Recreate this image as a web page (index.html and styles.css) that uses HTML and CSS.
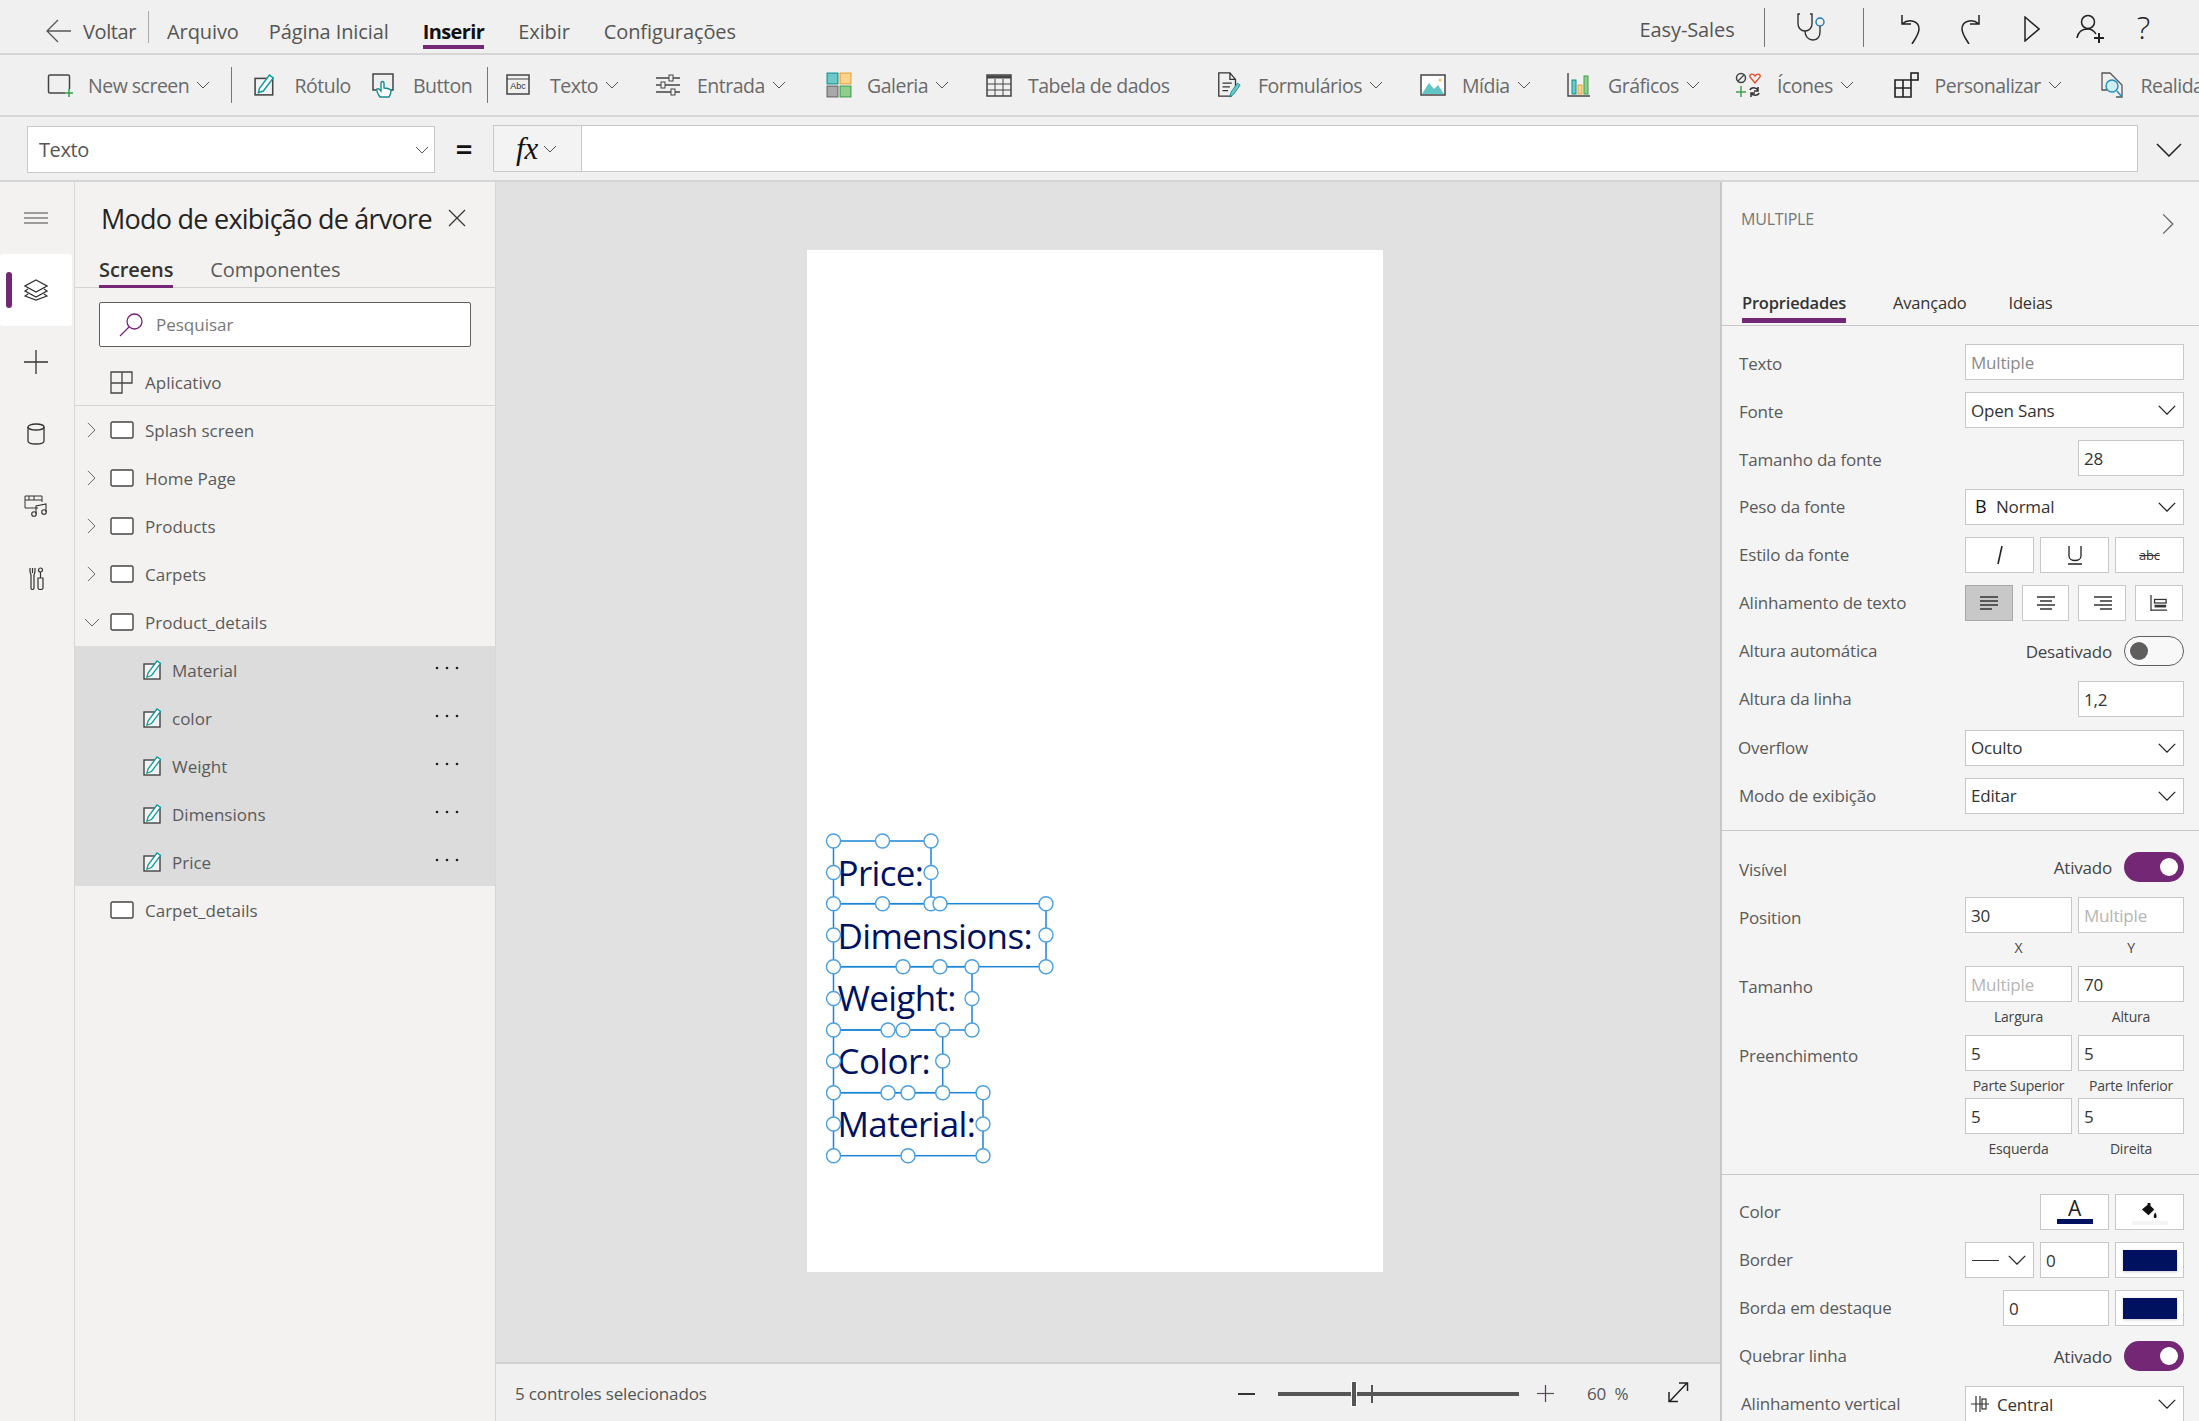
FILE: index.html
```html
<!DOCTYPE html>
<html lang="pt">
<head>
<meta charset="utf-8">
<title>Easy-Sales</title>
<link rel="stylesheet" href="styles.css">
</head>
<body>
<svg class="defs" width="0" height="0">
  <symbol id="chev" viewBox="0 0 14 8"><path d="M1 1l6 6 6-6" fill="none" stroke="currentColor" stroke-width="1"/></symbol>
  <symbol id="chevb" viewBox="0 0 22 12"><path d="M1 1l10 10 10-10" fill="none" stroke="#222" stroke-width="1.6"/></symbol>
  <symbol id="chevr" viewBox="0 0 10 18"><path d="M1 1l8 8-8 8" fill="none" stroke="#666" stroke-width="1.1"/></symbol>
  <symbol id="scr" viewBox="0 0 24 18"><rect x="1" y="1" width="22" height="16" rx="1.5" fill="#fff" stroke="#444" stroke-width="1.4"/></symbol>
  <symbol id="lbl" viewBox="0 0 20 20"><rect x="1" y="4" width="16" height="15" fill="#f3f3f3" stroke="#444" stroke-width="1.4"/><path d="M4 17l1-4 9-12 3.500 2.500-9 12z" fill="#fff" stroke="#0f9a9a" stroke-width="1.3"/></symbol>
  <symbol id="dots" viewBox="0 0 24 4"><circle cx="2" cy="2" r="1.300" fill="#222"/><circle cx="12" cy="2" r="1.300" fill="#222"/><circle cx="22" cy="2" r="1.300" fill="#222"/></symbol>
</svg>
<div class="app">

<header class="topbar">
  <svg class="ic-back" viewBox="0 0 25 24"><path d="M12 1L1 12l11 11M1 12h24" fill="none" stroke="#555" stroke-width="1.300"/></svg>
  <span class="nav-back">Voltar</span>
  <span class="vsep first"></span>
  <nav class="nav">
    <a class="nav-item tight">Arquivo</a>
    <a class="nav-item">Página Inicial</a>
    <a class="nav-item active">Inserir</a>
    <a class="nav-item">Exibir</a>
    <a class="nav-item">Configurações</a>
  </nav>
  <div class="top-right">
    <span class="app-name">Easy-Sales</span>
    <span class="vsep tall"></span>
    <svg class="ic-steth" viewBox="0 0 30 28"><path d="M3 1H1v10c0 4 3 7 7 7s7-3 7-7V1h-2" fill="none" stroke="#333" stroke-width="1.400"/><path d="M8 18c0 5 3 9 8 9s7-4 7-8v-6" fill="none" stroke="#333" stroke-width="1.400"/><circle cx="23" cy="9" r="4" fill="none" stroke="#2277aa" stroke-width="1.400"/></svg>
    <span class="vsep tall b"></span>
    <svg class="ic-top undo" viewBox="0 0 22 30"><path d="M3 1v9h9M3 10c7-6 17-3 17 5 0 5-4 10-7 15" fill="none" stroke="#222" stroke-width="1.500"/></svg>
    <svg class="ic-top redo" viewBox="0 0 22 30"><path d="M19 1v9h-9M19 10c-7-6-17-3-17 5 0 5 4 10 7 15" fill="none" stroke="#222" stroke-width="1.500"/></svg>
    <svg class="ic-top play" viewBox="0 0 16 26"><path d="M1 1l14 12L1 25z" fill="none" stroke="#222" stroke-width="1.500"/></svg>
    <svg class="ic-top person" viewBox="0 0 28 30"><circle cx="12" cy="8" r="6.500" fill="none" stroke="#222" stroke-width="1.500"/><path d="M1 24c1-6 5-9 11-9 4 0 6 2 8 5" fill="none" stroke="#222" stroke-width="1.500"/><path d="M23 19v10M18 24h10" stroke="#222" stroke-width="2"/></svg>
    <span class="help">?</span>
  </div>
</header>

<div class="ribbon">
  <div class="rib w-new"><svg class="ri" viewBox="0 0 26 24"><path d="M18 20H3a1.500 1.500 0 0 1-1.500-1.500v-15A1.500 1.500 0 0 1 3 2h18a1.500 1.500 0 0 1 1.500 1.500V16" fill="none" stroke="#444" stroke-width="1.500"/><path d="M22 16v8M18 20h8" stroke="#2f9e44" stroke-width="1.500"/></svg><span>New screen</span><svg class="ch"><use href="#chev"/></svg></div>
  <span class="rsep a"></span>
  <div class="rib w-rot"><svg class="ri small"><use href="#lbl"/></svg><span>Rótulo</span></div>
  <div class="rib w-btn"><svg class="ri" viewBox="0 0 26 26"><path d="M6 18H2V2h20v16h-2" fill="none" stroke="#444" stroke-width="1.500"/><path d="M9 25c-2-3-4-6-3-8 2-1 3 1 4 2v-8c0-2 3-2 3 0v5c3 0 7 1 7 3 0 3-1 4-2 6z" fill="#fff" stroke="#0f8f8f" stroke-width="1.400"/></svg><span>Button</span></div>
  <span class="rsep b"></span>
  <div class="rib w-txt"><svg class="ri" viewBox="0 0 26 24"><rect x="1" y="2" width="22" height="19" fill="none" stroke="#444" stroke-width="1.500"/><path d="M1 6h22" stroke="#444"/><text x="12" y="16" class="abc">Abc</text></svg><span>Texto</span><svg class="ch"><use href="#chev"/></svg></div>
  <div class="rib w-ent"><svg class="ri" viewBox="0 0 26 24"><path d="M1 5h24M1 12h24M1 19h24" stroke="#444" stroke-width="1.500"/><rect x="14" y="2" width="4" height="6" fill="#f0f0f0" stroke="#444"/><rect x="6" y="9" width="4" height="6" fill="#f0f0f0" stroke="#444"/><rect x="16" y="16" width="4" height="6" fill="#f0f0f0" stroke="#444"/></svg><span>Entrada</span><svg class="ch"><use href="#chev"/></svg></div>
  <div class="rib w-gal"><svg class="ri" viewBox="0 0 24 24"><rect x="1" y="1" width="10" height="10" fill="#6dc8c8" stroke="#0f8f8f"/><rect x="13" y="1" width="10" height="10" fill="#fbd38d" stroke="#e8a33d"/><rect x="1" y="13" width="10" height="10" fill="#a8a8a8" stroke="#666"/><rect x="13" y="13" width="10" height="10" fill="#8fce8f" stroke="#3f9e4f"/></svg><span>Galeria</span><svg class="ch"><use href="#chev"/></svg></div>
  <div class="rib w-tab"><svg class="ri" viewBox="0 0 26 24"><rect x="1" y="2" width="24" height="21" fill="none" stroke="#444" stroke-width="1.500"/><path d="M1 4h24" stroke="#444" stroke-width="3"/><path d="M1 11h24M1 17h24M9 6v17M17 6v17" stroke="#444"/></svg><span>Tabela de dados</span></div>
  <div class="rib w-for"><svg class="ri" viewBox="0 0 26 28"><path d="M16 26H2V1h12l6 7v8M14 1v7h6M6 12h10M6 16h8M6 20h6" fill="none" stroke="#333" stroke-width="1.400"/><path d="M14 27l1-5 7-10 3 2-7 10z" fill="#6dc8c8" stroke="#0f8f8f"/></svg><span>Formulários</span><svg class="ch"><use href="#chev"/></svg></div>
  <div class="rib w-mid"><svg class="ri" viewBox="0 0 26 24"><rect x="1" y="2" width="24" height="20" fill="#fff" stroke="#444" stroke-width="1.500"/><path d="M2 21l7-11 5 6 4-4 6 9z" fill="#5fc5c5"/><circle cx="20" cy="7" r="1.500" fill="#f3c15f"/></svg><span>Mídia</span><svg class="ch"><use href="#chev"/></svg></div>
  <div class="rib w-gra"><svg class="ri" viewBox="0 0 24 26"><path d="M1 1v23h22" fill="none" stroke="#444" stroke-width="1.400"/><rect x="5" y="8" width="4" height="14" fill="#6dc8c8" stroke="#0f8f8f"/><rect x="11" y="13" width="4" height="9" fill="#fbd38d" stroke="#e8a33d"/><rect x="17" y="4" width="4" height="18" fill="#8fce8f" stroke="#3f9e4f"/></svg><span>Gráficos</span><svg class="ch"><use href="#chev"/></svg></div>
  <div class="rib w-ico"><svg class="ri" viewBox="0 0 26 26"><circle cx="6" cy="6" r="4.500" fill="none" stroke="#444" stroke-width="1.500"/><path d="M3 9l6-6" stroke="#444" stroke-width="1.300"/><path d="M20 11l-5-6c-1-3 3-4 5-1 2-3 6-2 5 1z" fill="none" stroke="#e8502a" stroke-width="1.400"/><path d="M6 14v11M1 20h10" stroke="#3f9e4f" stroke-width="1.500"/><path d="M15 18c1-3 6-3 8 0M24 21c-1 3-6 3-8 0M23 15v4h-4M16 25v-4h4" fill="none" stroke="#333" stroke-width="1.500"/></svg><span>Ícones</span><svg class="ch"><use href="#chev"/></svg></div>
  <div class="rib w-per"><svg class="ri" viewBox="0 0 26 26"><path d="M1 8h16v17H1zM1 16h16M9 8v17" fill="none" stroke="#222" stroke-width="1.600"/><rect x="17" y="1" width="7" height="7" fill="none" stroke="#222" stroke-width="1.600"/></svg><span>Personalizar</span><svg class="ch"><use href="#chev"/></svg></div>
  <div class="rib w-rea"><svg class="ri" viewBox="0 0 24 26"><path d="M7 18H2V1h8l12 12v12h-6" fill="none" stroke="#555" stroke-width="1.300"/><circle cx="12" cy="14" r="6" fill="#cfeef5" stroke="#1f8fc0" stroke-width="1.400"/><path d="M17 19l5 6" stroke="#1f8fc0" stroke-width="1.500"/></svg><span>Realidade</span></div>
</div>

<div class="formula">
  <div class="prop-select"><span>Texto</span><svg class="ch"><use href="#chev"/></svg></div>
  <span class="eq">=</span>
  <div class="fx-box"><span class="fx">fx</span><svg class="ch"><use href="#chev"/></svg></div>
  <div class="fx-input"></div>
  <svg class="fx-expand" viewBox="0 0 26 14"><path d="M1 1l12 12L25 1" fill="none" stroke="#222" stroke-width="1.500"/></svg>
</div>

<div class="main">
  <aside class="rail">
    <div class="rail-item"><svg class="rail-ic" viewBox="0 0 24 12"><path d="M0 1h24M0 6h24M0 11h24" stroke="#444"/></svg></div>
    <div class="rail-item on"><svg class="rail-ic" viewBox="0 0 24 22"><path d="M12 1l11 6-11 6L1 7z" fill="#fff" stroke="#333" stroke-width="1.300"/><path d="M4 10l-3 2 11 6 11-6-3-2M4 15l-3 2 11 4 11-4-3-2" fill="none" stroke="#333" stroke-width="1.300"/></svg></div>
    <div class="rail-item"><svg class="rail-ic" viewBox="0 0 24 24"><path d="M12 0v24M0 12h24" stroke="#333" stroke-width="1.300"/></svg></div>
    <div class="rail-item"><svg class="rail-ic" viewBox="0 0 24 22"><ellipse cx="12" cy="4" rx="8" ry="3" fill="none" stroke="#333" stroke-width="1.300"/><path d="M4 4v14c0 4 16 4 16 0V4" fill="none" stroke="#333" stroke-width="1.300"/></svg></div>
    <div class="rail-item"><svg class="rail-ic" viewBox="0 0 24 22"><path d="M14 13H1V1h17v6M1 5h17M5 1v4M10 1v4" fill="none" stroke="#333" stroke-width="1"/><path d="M12 19V11l10-2v8" fill="none" stroke="#333" stroke-width="1.100"/><circle cx="10" cy="19" r="2.300" fill="none" stroke="#333" stroke-width="1.100"/><circle cx="20" cy="17" r="2.300" fill="none" stroke="#333" stroke-width="1.100"/></svg></div>
    <div class="rail-item"><svg class="rail-tools" viewBox="0 0 15 23"><path d="M1 1v3c0 2 1 3 1 4v13c0 2 3 2 3 0V8c0-1 1-2 1-4V1" fill="none" stroke="#333" stroke-width="1.200"/><path d="M3.500 1v5" stroke="#333" stroke-width="1.200"/><circle cx="11.500" cy="3" r="2" fill="none" stroke="#333" stroke-width="1.200"/><path d="M11.500 5v6M9 11h5v10c0 2-5 2-5 0z" fill="none" stroke="#333" stroke-width="1.200"/></svg></div>
  </aside>

  <section class="tree">
    <div class="tree-head"><h1>Modo de exibição de árvore</h1><svg class="close" viewBox="0 0 18 18"><path d="M1 1l16 16M17 1L1 17" stroke="#333" stroke-width="1.200"/></svg></div>
    <div class="tree-tabs"><span class="tt active">Screens</span><span class="tt">Componentes</span></div>
    <div class="search"><svg class="search-ic" viewBox="0 0 24 24"><circle cx="15.500" cy="8.500" r="7.500" fill="none" stroke="#742774" stroke-width="1.300"/><path d="M10 14L1 23" stroke="#742774" stroke-width="1.300"/></svg><span>Pesquisar</span></div>
    <div class="app-row"><svg class="app-ic" viewBox="0 0 23 23"><path d="M1 1h21v11H12v10H1zM1 12h11M12 1v11" fill="none" stroke="#444" stroke-width="1.300"/></svg><span>Aplicativo</span></div>
    <ul class="list">
      <li class="node"><svg class="tw"><use href="#chevr"/></svg><svg class="scr"><use href="#scr"/></svg><span>Splash screen</span></li>
      <li class="node"><svg class="tw"><use href="#chevr"/></svg><svg class="scr"><use href="#scr"/></svg><span>Home Page</span></li>
      <li class="node"><svg class="tw"><use href="#chevr"/></svg><svg class="scr"><use href="#scr"/></svg><span>Products</span></li>
      <li class="node"><svg class="tw"><use href="#chevr"/></svg><svg class="scr"><use href="#scr"/></svg><span>Carpets</span></li>
      <li class="node"><svg class="tw open" viewBox="0 0 16 9"><path d="M1 1l7 7 7-7" fill="none" stroke="#666" stroke-width="1"/></svg><svg class="scr"><use href="#scr"/></svg><span>Product_details</span></li>
      <li class="node sel"><svg class="lb"><use href="#lbl"/></svg><span>Material</span><svg class="more"><use href="#dots"/></svg></li>
      <li class="node sel"><svg class="lb"><use href="#lbl"/></svg><span>color</span><svg class="more"><use href="#dots"/></svg></li>
      <li class="node sel"><svg class="lb"><use href="#lbl"/></svg><span>Weight</span><svg class="more"><use href="#dots"/></svg></li>
      <li class="node sel"><svg class="lb"><use href="#lbl"/></svg><span>Dimensions</span><svg class="more"><use href="#dots"/></svg></li>
      <li class="node sel"><svg class="lb"><use href="#lbl"/></svg><span>Price</span><svg class="more"><use href="#dots"/></svg></li>
      <li class="node"><span class="tw-gap"></span><svg class="scr"><use href="#scr"/></svg><span>Carpet_details</span></li>
    </ul>
  </section>

  <section class="center">
    <div class="canvas">
      <div class="screen">
        <div class="ctl" style="left:26.500px;top:592px">Price:</div>
        <div class="ctl" style="left:26.500px;top:655px">Dimensions:</div>
        <div class="ctl" style="left:26.500px;top:717px">Weight:</div>
        <div class="ctl" style="left:26.500px;top:780px">Color:</div>
        <div class="ctl" style="left:26.500px;top:843px">Material:</div>
        <svg class="handles" viewBox="800 810 280 370">
          <g class="hb">
            <rect x="833.500" y="841" width="97.500" height="62.700"/>
            <rect x="833.500" y="903.700" width="212.500" height="63"/>
            <rect x="833.500" y="966.700" width="138.500" height="63.300"/>
            <rect x="833.500" y="1030" width="109.200" height="62.700"/>
            <rect x="833.500" y="1092.700" width="149.500" height="63"/>
          </g>
          <g class="hc">
            <circle cx="833.500" cy="841" r="7"/><circle cx="882.500" cy="841" r="7"/><circle cx="931" cy="841" r="7"/><circle cx="833.500" cy="872.500" r="7"/><circle cx="931" cy="872.500" r="7"/>
            <circle cx="882.500" cy="903.700" r="7"/><circle cx="931" cy="903.700" r="7"/><circle cx="940" cy="903.700" r="7"/><circle cx="1046" cy="903.700" r="7"/><circle cx="833.500" cy="903.700" r="7"/>
            <circle cx="833.500" cy="935" r="7"/><circle cx="1046" cy="935" r="7"/>
            <circle cx="833.500" cy="966.700" r="7"/><circle cx="903" cy="966.700" r="7"/><circle cx="940" cy="966.700" r="7"/><circle cx="972" cy="966.700" r="7"/><circle cx="1046" cy="966.700" r="7"/>
            <circle cx="833.500" cy="998.500" r="7"/><circle cx="972" cy="998.500" r="7"/>
            <circle cx="833.500" cy="1030" r="7"/><circle cx="888" cy="1030" r="7"/><circle cx="903" cy="1030" r="7"/><circle cx="942.700" cy="1030" r="7"/><circle cx="972" cy="1030" r="7"/>
            <circle cx="833.500" cy="1061" r="7"/><circle cx="942.700" cy="1061" r="7"/>
            <circle cx="833.500" cy="1092.700" r="7"/><circle cx="888" cy="1092.700" r="7"/><circle cx="908" cy="1092.700" r="7"/><circle cx="942.700" cy="1092.700" r="7"/><circle cx="983" cy="1092.700" r="7"/>
            <circle cx="833.500" cy="1124" r="7"/><circle cx="983" cy="1124" r="7"/>
            <circle cx="833.500" cy="1155.700" r="7"/><circle cx="908" cy="1155.700" r="7"/><circle cx="983" cy="1155.700" r="7"/>
          </g>
        </svg>
      </div>
    </div>
    <footer class="status">
      <span class="st-text">5 controles selecionados</span>
      <span class="minus"></span>
      <div class="slider"><i class="thumb"></i><i class="tick"></i></div>
      <svg class="plus" viewBox="0 0 17 17"><path d="M0 8.500h17" stroke="#555" stroke-width="1.200"/><path d="M8.500 0v17" stroke="#742774" stroke-width="1.200"/></svg>
      <span class="pct">60 %</span>
      <svg class="expand" viewBox="0 0 23 22"><path d="M3 20L20 2M12 2h8.500v8M2 11v9.500h9" fill="none" stroke="#222" stroke-width="1.500"/></svg>
    </footer>
  </section>

  <aside class="props">
    <div class="props-head"><span class="ph-title">MULTIPLE</span><svg class="ph-chev"><use href="#chevr"/></svg></div>
    <div class="props-tabs"><span class="pt active">Propriedades</span><span class="pt">Avançado</span><span class="pt last">Ideias</span></div>

    <div class="sec first">
      <div class="row low"><label>Texto</label><div class="inp w-l ph">Multiple</div></div>
      <div class="row low"><label>Fonte</label><div class="inp w-l sel-i"><span>Open Sans</span><svg class="cb"><use href="#chevb"/></svg></div></div>
      <div class="row low"><label>Tamanho da fonte</label><div class="inp w-s">28</div></div>
      <div class="row"><label>Peso da fonte</label><div class="inp w-l sel-i"><span class="b-ic">B</span><span class="grow">Normal</span><svg class="cb"><use href="#chevb"/></svg></div></div>
      <div class="row"><label>Estilo da fonte</label>
        <div class="btns three">
          <div class="btn"><svg class="b1" viewBox="0 0 10 20"><path d="M7 1L3 19" stroke="#222" stroke-width="1.600"/></svg></div>
          <div class="btn"><svg class="b1" viewBox="0 0 16 20"><path d="M2 1v10c0 6 12 6 12 0V1M1 19h14" fill="none" stroke="#222" stroke-width="1.300"/></svg></div>
          <div class="btn strike">abc</div>
        </div>
      </div>
      <div class="row"><label>Alinhamento de texto</label>
        <div class="btns four">
          <div class="btn on"><svg class="b2" viewBox="0 0 20 14"><path d="M1 1h18M1 5h18M1 9h18M1 13h12" stroke="#333" stroke-width="1.400"/></svg></div>
          <div class="btn"><svg class="b2" viewBox="0 0 20 14"><path d="M1 1h18M4 5h12M1 9h18M4 13h12" stroke="#333" stroke-width="1.400"/></svg></div>
          <div class="btn"><svg class="b2" viewBox="0 0 20 14"><path d="M2 1h18M8 5h12M2 9h18M8 13h12" stroke="#333" stroke-width="1.400"/></svg></div>
          <div class="btn"><svg class="b2" viewBox="0 0 20 18"><path d="M1 0v18M1 17h18" stroke="#333" stroke-width="1.400"/><rect x="5" y="5" width="13" height="4" fill="none" stroke="#333" stroke-width="1.400"/><rect x="5" y="11" width="13" height="3" fill="#333"/></svg></div>
        </div>
      </div>
      <div class="row"><label>Altura automática</label><span class="tg-text">Desativado</span><span class="toggle off"></span></div>
      <div class="row"><label>Altura da linha</label><div class="inp w-s">1,2</div></div>
      <div class="row"><label class="ov">Overflow</label><div class="inp w-l sel-i"><span>Oculto</span><svg class="cb"><use href="#chevb"/></svg></div></div>
      <div class="row"><label>Modo de exibição</label><div class="inp w-l sel-i"><span>Editar</span><svg class="cb"><use href="#chevb"/></svg></div></div>
    </div>

    <div class="sec second">
      <div class="row low"><label>Visível</label><span class="tg-text">Ativado</span><span class="toggle"></span></div>
      <div class="dim first-dim"><label>Position</label>
        <div class="dim-grid"><div class="inp">30</div><div class="inp ph light">Multiple</div><span class="cap">X</span><span class="cap">Y</span></div>
      </div>
      <div class="dim"><label>Tamanho</label>
        <div class="dim-grid"><div class="inp ph light">Multiple</div><div class="inp">70</div><span class="cap">Largura</span><span class="cap">Altura</span></div>
      </div>
      <div class="dim"><label>Preenchimento</label>
        <div class="dim-grid"><div class="inp">5</div><div class="inp">5</div><span class="cap short">Parte Superior</span><span class="cap short">Parte Inferior</span><div class="inp">5</div><div class="inp">5</div><span class="cap">Esquerda</span><span class="cap">Direita</span></div>
      </div>
    </div>

    <div class="sec third">
      <div class="row"><label>Color</label>
        <div class="btns two">
          <div class="btn col"><span class="big-a">A</span><i class="bar navy"></i></div>
          <div class="btn col"><svg class="bucket" viewBox="0 0 18 18"><path d="M7 1h3v3l4 4-6 6-7-6 6-5z" fill="#111"/><path d="M15 11c-2 3-2 6 0 6s2-3 0-6z" fill="#111"/></svg><i class="bar pale"></i></div>
        </div>
      </div>
      <div class="row"><label>Border</label>
        <div class="btns three">
          <div class="btn bd"><i class="dash"></i><svg class="cb"><use href="#chevb"/></svg></div>
          <div class="inp full">0</div>
          <div class="btn"><i class="swatch"></i></div>
        </div>
      </div>
      <div class="row"><label>Borda em destaque</label>
        <div class="inp w-m">0</div>
        <div class="btn sw-g"><i class="swatch"></i></div>
      </div>
      <div class="row"><label>Quebrar linha</label><span class="tg-text">Ativado</span><span class="toggle"></span></div>
      <div class="row"><label class="va">Alinhamento vertical</label><div class="inp w-l sel-i"><svg class="va-ic" viewBox="0 0 18 16"><path d="M0 8h18M5 0v16M9 0v16" stroke="#333" stroke-width="1.200" fill="none"/><rect x="11" y="3" width="4" height="10" fill="none" stroke="#333" stroke-width="1.200"/></svg><span class="grow">Central</span><svg class="cb"><use href="#chevb"/></svg></div></div>
    </div>
  </aside>
</div>
</div>
</body>
</html>
```

FILE: styles.css
```css
* { box-sizing: border-box; }
html, body { margin: 0; padding: 0; }
body {
  width: 2199px; height: 1421px; overflow: hidden;
  font-family: "Open Sans", "Noto Sans", "Liberation Sans", sans-serif;
  color: #555; background: #f0f0f0;
}
.defs { display: block; height: 0; }
svg { display: block; flex: none; }
.app { width: 2199px; height: 1421px; display: flex; flex-direction: column; overflow: hidden; }

/* top bar */
.topbar { height: 55px; flex: none; display: flex; align-items: flex-start; padding-left: 46px; border-bottom: 2px solid #d6d6d6; background: #f0f0f0; font-size: 20px; letter-spacing: -0.1px; }
.ic-back { width: 25px; height: 24px; margin: 19px 12px 0 0; }
.nav-back { line-height: 27px; padding-top: 18px; letter-spacing: -0.4px; }
.vsep { display: block; width: 1px; background: #aaa; }
.vsep.first { height: 32px; margin: 11px 18px 0 12px; }
.nav { display: flex; gap: 34px; }
.nav-item { display: block; padding-top: 18px; line-height: 27px; border-bottom: 4px solid transparent; height: 49px; color: #555; }
.nav-item.tight { margin-right: -4px; }
.nav-item.active { color: #111; font-weight: 700; border-bottom-color: #742774; letter-spacing: -0.6px; }
.top-right { margin-left: auto; display: flex; align-items: flex-start; padding-right: 49px; }
.app-name { padding-top: 16px; line-height: 27px; margin-right: 29px; }
.vsep.tall { height: 39px; margin-top: 8px; background: #777; }
.ic-steth { width: 30px; height: 28px; margin: 13px 36px 0 32px; }
.ic-top.undo { width: 22px; height: 30px; margin: 14px 39px 0 35px; }
.ic-top.redo { width: 22px; height: 30px; margin: 14px 42px 0 0; }
.ic-top.play { width: 16px; height: 26px; margin: 16px 36px 0 0; }
.ic-top.person { width: 28px; height: 30px; margin: 14px 33px 0 0; }
.help { font-size: 32px; color: #222; line-height: 40px; padding-top: 7px; font-weight: 300; }

/* ribbon */
.ribbon { height: 62px; flex: none; display: flex; align-items: center; padding-left: 47px; border-bottom: 2px solid #d6d6d6; font-size: 19.5px; letter-spacing: -0.5px; color: #6a6a6a; white-space: nowrap; overflow: hidden; }
.rib { display: flex; align-items: center; flex: none; }
.ri { width: 26px; height: 26px; }
.ri.small { width: 22px; height: 24px; }
.ch { width: 14px; height: 8px; margin-left: 7px; color: #555; }
.abc { font-family: "Liberation Sans", sans-serif; font-size: 9px; text-anchor: middle; letter-spacing: 0; fill: #333; }
.rsep { display: block; width: 1px; height: 36px; background: #777; flex: none; }
.rsep.a { margin: 0 22px 0 20px; }
.rsep.b { margin: 0 18px 0 16px; }
.rib svg.ri { margin-right: 16px; }
.w-new { width: 164px; }
.w-rot { width: 117px; }
.w-btn { width: 100px; }
.w-txt { width: 149px; }
.w-ent { width: 171px; }
.w-gal { width: 160px; }
.w-tab { width: 230px; }
.w-for { width: 204px; }
.w-mid { width: 146px; }
.w-gra { width: 169px; }
.w-ico { width: 158.500px; }
.w-per { width: 205px; }
.rib.w-new svg.ri, .rib.w-gal svg.ri, .rib.w-per svg.ri { margin-right: 15px; }
.rib.w-rot svg.ri { margin-right: 18.500px; }
.rib.w-txt svg.ri { margin-right: 18px; }

/* formula */
.formula { height: 65px; flex: none; display: flex; align-items: flex-start; padding: 8px 0 0 27px; border-bottom: 2px solid #d6d6d6; }
.prop-select { width: 408px; height: 47px; margin-top: 1px; background: #fff; border: 1px solid #c8c8c8; display: flex; align-items: center; justify-content: space-between; padding: 0 5px 0 11px; font-size: 20px; letter-spacing: -0.4px; color: #555; }
.eq { width: 58px; text-align: center; font-size: 30px; line-height: 50px; color: #111; font-weight: 600; }
.fx-box { width: 89px; height: 47px; background: #f3f3f3; border: 1px solid #c8c8c8; border-right: 1px solid #c8c8c8; display: flex; align-items: center; padding-left: 22px; color: #222; }
.fx { font-family: "Liberation Serif", serif; font-style: italic; font-size: 31px; color: #111; line-height: 47px; }
.fx-box .ch { margin-left: 5px; }
.fx-input { width: 1556px; height: 47px; background: #fff; border: 1px solid #c8c8c8; border-left: 0; }
.fx-expand { width: 26px; height: 14px; margin: 18px 0 0 18px; }

/* main */
.main { flex: 1; min-height: 0; display: flex; }
.rail { width: 75px; flex: none; background: #f3f2f1; border-right: 1px solid #d9d7d5; padding-top: 0; }
.rail-item { height: 72px; display: flex; align-items: center; justify-content: center; position: relative; width: 72px; }
.rail-ic { width: 24px; height: 24px; }
.rail-tools { width: 15px; height: 23px; }
.rail-item.on { background: #fff; border-radius: 3px; }
.rail-item.on::before { content: ""; position: absolute; left: 6px; top: 18px; width: 6px; height: 36px; border-radius: 3px; background: #742774; }

/* tree panel */
.tree { width: 421px; flex: none; background: #f3f2f1; border-right: 1px solid #d9d7d5; font-size: 17px; color: #5a5a5a; }
.tree-head { display: flex; align-items: center; height: 74px; padding: 0 0 0 26px; }
.tree-head h1 { margin: 0; font-size: 27px; font-weight: 400; color: #252423; letter-spacing: -0.75px; white-space: nowrap; width: 347px; line-height: 74px; }
.close { width: 18px; height: 18px; margin-top: -2px; }
.tree-tabs { display: flex; height: 32px; gap: 37px; padding-left: 24px; border-bottom: 1px solid #d5d3d1; font-size: 20px; letter-spacing: -0.1px; margin-bottom: 14px; }
.tt { height: 32px; line-height: 28px; border-bottom: 3px solid transparent; }
.tt.active { color: #333; font-weight: 600; border-bottom-color: #742774; }
.search { margin-left: 24px; width: 372px; height: 45px; background: #fff; border: 1px solid #605e5c; border-radius: 2px; display: flex; align-items: center; padding-left: 19px; font-size: 17px; color: #777; }
.search-ic { width: 24px; height: 24px; margin-right: 13px; }
.app-row { height: 59px; padding-top: 12px; display: flex; align-items: center; padding-left: 35px; border-bottom: 1px solid #d5d3d1; }
.app-ic { width: 23px; height: 23px; margin-right: 12px; }
.list { list-style: none; margin: 0; padding: 0; }
.node { height: 48px; display: flex; align-items: center; padding-left: 12px; }
.node.sel { background: #dcdcdc; padding-left: 68px; }
.tw { width: 9px; height: 16px; margin-right: 14px; margin-left: 0; color: #666; }
.tw.open { width: 16px; height: 9px; margin-left: -3px; margin-right: 10px; }
.tw-gap { width: 23px; flex: none; }
.scr { width: 24px; height: 18px; margin-right: 11px; }
.lb { width: 20px; height: 20px; margin-right: 9px; }
.more { width: 24px; height: 4px; margin-left: auto; margin-right: 36px; margin-top: -4px; }

/* center */
.center { flex: 1; min-width: 0; display: flex; flex-direction: column; }
.canvas { flex: 1; min-height: 0; background: #e1e1e1; padding: 68px 0 0 311px; border-bottom: 2px solid #d2d2d2; }
.screen { width: 576px; height: 1022px; background: #fff; position: relative; }
.ctl { position: absolute; padding: 5px 4px; font-size: 35px; line-height: 52px; color: #00125f; white-space: nowrap; letter-spacing: -0.65px; }
.handles { position: absolute; left: -7px; top: 560px; width: 280px; height: 370px; overflow: visible; }
.hb rect { fill: none; stroke: #1b85d8; stroke-width: 1.5; }
.hc circle { fill: #fff; stroke: #4a9fe0; stroke-width: 1.4; }
.status { height: 57px; flex: none; display: flex; align-items: center; padding: 2px 0 0 19px; background: #f0f0f0; font-size: 17px; letter-spacing: -0.15px; color: #555; }
.st-text { width: 723px; }
.minus { display: block; width: 17px; height: 2px; background: #333; }
.slider { width: 241px; height: 4px; background: #555; margin: 0 18px 0 23px; position: relative; }
.thumb { position: absolute; left: 73px; top: -11px; width: 6px; height: 26px; background: #555; border: 1px solid #fff; }
.tick { position: absolute; left: 93px; top: -7px; width: 2px; height: 18px; background: #555; }
.plus { width: 17px; height: 17px; }
.pct { margin-left: 33px; width: 80px; word-spacing: 4px; }
.expand { width: 23px; height: 22px; margin-top: -3px; }

/* properties */
.props { width: 479px; flex: none; background: #f4f4f4; border-left: 2px solid #c8c8c8; font-size: 17px; color: #5a5a5a; overflow: hidden; }
.props-head { height: 100px; display: flex; align-items: flex-start; padding: 26px 0 0 19px; }
.ph-title { font-size: 16px; line-height: 22px; color: #777; flex: 1; letter-spacing: -0.2px; }
.ph-chev { width: 12px; height: 24px; margin: 4px 25px 0 0; }
.props-tabs { height: 44px; display: flex; gap: 47px; padding-left: 20px; border-bottom: 1px solid #c8c8c8; font-size: 16.500px; color: #333; letter-spacing: -0.2px; }
.pt { height: 41px; line-height: 42px; border-bottom: 5px solid transparent; }
.pt.active { font-weight: 600; border-bottom-color: #742774; color: #333; letter-spacing: -0.2px; }
.pt.last { margin-left: -5px; }
.sec { border-bottom: 1px solid #c8c8c8; padding: 0 15px 10px 17px; letter-spacing: -0.2px; }
.sec.first { padding-top: 12px; }
.sec.second { padding-top: 12px; }
.sec.third { padding-top: 13px; border-bottom: 0; }
.row { height: 48.2px; display: flex; align-items: center; }
.row label, .dim label { flex: 1; white-space: nowrap; line-height: 24px; }
.row.low label { padding-top: 3px; }
.sec.second .row.low label { padding-top: 6px; }
.sec.second .tg-text { padding-top: 1px; }
.sec.third .row { height: 48px; }
.inp { height: 36px; background: #fff; border: 1px solid #c8c8c8; line-height: 35px; padding-left: 5px; color: #333; white-space: nowrap; }
.w-l { width: 219px; }
.w-s { width: 106px; }
.w-m { width: 106px; }
.ph { color: #8a8a8a; }
.ph.light { color: #b5b5b5; }
.sel-i { display: flex; align-items: center; padding-right: 7px; color: #333; }
.sel-i > span:first-child { flex: 1; }
.grow { flex: 1; }
.cb { width: 18px; height: 10px; }
.b-ic { flex: none !important; font-size: 18px; color: #111; width: 25px; padding-left: 4px; font-weight: 400; }
.btns { display: grid; gap: 6px; width: 219px; }
.btns.three { grid-template-columns: 69px 69px 69px; }
.btns.four { grid-template-columns: 48px 47px 48px 48px; gap: 9px; }
.btns.two { grid-template-columns: 69px 69px; width: 144px; }
.btn { height: 36px; background: #fff; border: 1px solid #c8c8c8; display: flex; align-items: center; justify-content: center; color: #222; position: relative; }
.btn.on { background: #c8c8c8; border-color: #a8a8a8; }
.b1 { height: 20px; width: 16px; }
.b2 { width: 20px; height: 16px; }
.strike { font-size: 13px; text-decoration: line-through; color: #333; }
.tg-text { margin-right: 12px; color: #444; }
.toggle { display: block; width: 60px; height: 30px; border-radius: 15px; background: #742774; position: relative; flex: none; }
.toggle::after { content: ""; position: absolute; right: 6px; top: 6px; width: 18px; height: 18px; border-radius: 50%; background: #fff; }
.toggle.off { background: #f8f8f8; border: 1px solid #605e5c; }
.toggle.off::after { right: auto; left: 5px; top: 5px; background: #605e5c; }
.dim { display: flex; align-items: flex-start; margin-top: 3px; }
.dim.first-dim { margin-top: 6px; }
.dim label { padding-top: 9px; }
.dim-grid { width: 219px; display: grid; grid-template-columns: 107px 106px; column-gap: 6px; }
.cap { text-align: center; font-size: 14px; line-height: 30px; height: 30px; color: #444; white-space: nowrap; }
.cap.short { line-height: 30px; height: 27px; }
.col { flex-direction: column; gap: 0; }
.big-a { font-size: 21px; line-height: 22px; color: #222; margin-top: -3px; }
.bar { display: block; width: 36px; height: 5px; }
.bar.navy { background: #00125f; }
.bar.pale { background: #f4f4f4; height: 4px; margin-top: 2px; }
.bucket { width: 17px; height: 17px; margin-top: 2px; }
.bd { justify-content: space-between; padding: 0 7px 0 6px; }
.dash { display: block; width: 27px; height: 1px; background: #333; }
.inp.full { width: 100%; padding-left: 5px; font-size: 17px; }
.swatch { display: block; width: 54px; height: 21px; background: #00125f; box-shadow: 0 1px 3px rgba(0,0,0,.2); }
.sw-g { width: 69px; margin-left: 6px; }
.va-ic { width: 18px; height: 16px; margin-right: 8px; }
.va { padding-left: 2px; }
.ov { margin-left: -1px; }
```
